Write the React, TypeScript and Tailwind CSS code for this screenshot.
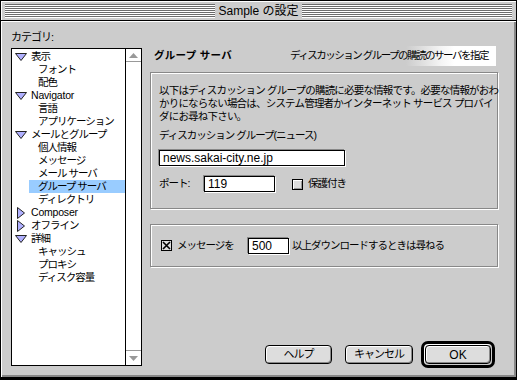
import React from 'react';

type Item = { label: string; kind: 'open' | 'closed' | 'leaf'; selected?: boolean; latin?: boolean };

const items: Item[] = [
  { label: '表示', kind: 'open' },
  { label: 'フォント', kind: 'leaf' },
  { label: '配色', kind: 'leaf' },
  { label: 'Navigator', kind: 'open', latin: true },
  { label: '言語', kind: 'leaf' },
  { label: 'アプリケーション', kind: 'leaf' },
  { label: 'メールとグループ', kind: 'open' },
  { label: '個人情報', kind: 'leaf' },
  { label: 'メッセージ', kind: 'leaf' },
  { label: 'メール サーバ', kind: 'leaf' },
  { label: 'グループ サーバ', kind: 'leaf', selected: true },
  { label: 'ディレクトリ', kind: 'leaf' },
  { label: 'Composer', kind: 'closed', latin: true },
  { label: 'オフライン', kind: 'closed' },
  { label: '詳細', kind: 'open' },
  { label: 'キャッシュ', kind: 'leaf' },
  { label: 'プロキシ', kind: 'leaf' },
  { label: 'ディスク容量', kind: 'leaf' },
];

const Twisty = ({ open }: { open: boolean }) =>
  open ? (
    <svg width="12" height="8" viewBox="0 0 12 8" className="shrink-0">
      <polygon points="0.5,0.5 11.5,0.5 6,7.5" fill="#b0b0ff" stroke="#222" strokeWidth="1" />
    </svg>
  ) : (
    <svg width="8" height="12" viewBox="0 0 8 12" className="shrink-0 ml-[2px]">
      <polygon points="0.5,0.5 7.5,6 0.5,11.5" fill="#b0b0ff" stroke="#222" strokeWidth="1" />
    </svg>
  );

const Stripes = () => (
  <div className="flex-1 h-[14px] bg-[repeating-linear-gradient(to_bottom,#6b6b6b_0px,#6b6b6b_1px,#ffffff_1px,#ffffff_2px)]" />
);

const Field = ({ value, className }: { value: string; className: string }) => (
  <div
    className={`h-[16px] bg-white border border-black shadow-[1px_1px_0_#ffffff,-1px_-1px_0_#888] pl-[3px] text-[12px] leading-[14px] tracking-normal text-black font-['Liberation_Sans',sans-serif] ${className}`}
  >
    {value}
  </div>
);

const Button = ({ children, className }: { children: React.ReactNode; className: string }) => (
  <div
    className={`h-[19px] flex items-center justify-center bg-[#dddddd] border border-black rounded-[4px] shadow-[inset_1px_1px_0_#ffffff,inset_-1px_-1px_0_#888888] text-[11px] ${className}`}
  >
    {children}
  </div>
);

export default function App() {
  return (
    <div className="w-[517px] h-[380px] bg-[#cccccc] border border-black border-b-[3px] flex flex-col text-black text-[10px] font-['Liberation_Sans','Noto_Sans_CJK_JP',sans-serif] tracking-[-1px] overflow-hidden">
      {/* title bar */}
      <div className="h-[20px] shrink-0 flex items-center px-[4px] border-b border-black shadow-[inset_1px_1px_0_#fff]">
        <Stripes />
        <div className="px-[3px] text-[12px] leading-[14px] tracking-normal">Sample の設定</div>
        <Stripes />
      </div>

      {/* body */}
      <div className="flex-1 flex shadow-[inset_1px_1px_0_#fff,inset_-2px_-2px_0_#888]">
        {/* left column */}
        <div className="ml-[10px] w-[131px] pt-[8px] flex flex-col pb-[11px]">
          <div className="h-[19px] text-[11px] leading-[16px]">カテゴリ:</div>
          <div className="flex-1 flex bg-white border border-black">
            <div className="flex-1 pt-[1px]">
              {items.map((it) => (
                <div key={it.label} className="h-[13px] flex items-center text-[10.5px]">
                  {it.kind === 'leaf' ? (
                    <div
                      className={`ml-[17px] h-[13px] flex-1 pl-[9px] leading-[13px] ${
                        it.selected ? 'bg-[#99ccff]' : ''
                      }`}
                    >
                      {it.label}
                    </div>
                  ) : (
                    <div className="flex items-center pl-[3px] gap-[4px] leading-[13px]">
                      <div className="w-[12px] flex justify-start">
                        <Twisty open={it.kind === 'open'} />
                      </div>
                      <span className={it.latin ? 'tracking-[-0.2px]' : ''}>{it.label}</span>
                    </div>
                  )}
                </div>
              ))}
            </div>
            <div className="w-[16px] border-l border-black flex flex-col">
              <div className="h-[13px] border-b border-[#999] flex items-center justify-center">
                <svg width="9" height="5" viewBox="0 0 9 5">
                  <polygon points="4.5,0 9,5 0,5" fill="#999" />
                </svg>
              </div>
              <div className="flex-1" />
              <div className="h-[15px] border-t border-[#999] flex items-center justify-center">
                <svg width="9" height="5" viewBox="0 0 9 5">
                  <polygon points="0,0 9,0 4.5,5" fill="#999" />
                </svg>
              </div>
            </div>
          </div>
        </div>

        {/* right column */}
        <div className="ml-[8px] w-[348px] pt-[25px] flex flex-col">
          <div className="w-[346px] h-[20px] flex items-center justify-between pl-[4px] pr-[8px] bg-[linear-gradient(to_right,transparent_0%,transparent_74%,#f4f4f4_84%,#ffffff_88%,#ffffff_100%)]">
            <span className="text-[10.5px] font-bold tracking-[0.3px]">グループ サーバ</span>
            <span className="text-[10.5px] tracking-[-1.5px]">ディスカッション グループの購読のサーバを指定</span>
          </div>

          <div className="mt-[6px] h-[137px] border border-[#888] shadow-[inset_1px_1px_0_#fff,1px_1px_0_#fff] pl-[8px] pt-[11px]">
            <div className="text-[10.5px] leading-[13px] tracking-[-0.8px] whitespace-nowrap">
              <div>以下はディスカッション グループの購読に必要な情報です。必要な情報がおわ</div>
              <div>かりにならない場合は、システム管理者かインターネット サービス プロバイ</div>
              <div>ダにお尋ね下さい。</div>
            </div>
            <div className="mt-[6px] text-[10.5px] leading-[13px]">ディスカッション グループ(ニュース)</div>
            <Field value="news.sakai-city.ne.jp" className="mt-[8px] w-[186px]" />
            <div className="mt-[10px] flex items-center h-[16px]">
              <span className="text-[10.5px] w-[45px]">ポート:</span>
              <Field value="119" className="w-[71px]" />
              <div className="ml-[17px] w-[11px] h-[11px] border border-black bg-[#dddddd] shadow-[inset_1px_1px_0_#fff,inset_-1px_-1px_0_#999]" />
              <span className="ml-[5px] text-[10.5px]">保護付き</span>
            </div>
          </div>

          <div className="mt-[15px] h-[43px] border border-[#888] shadow-[inset_1px_1px_0_#fff,1px_1px_0_#fff] pl-[10px] flex items-center">
            <div className="w-[11px] h-[11px] border border-black bg-[#dddddd] flex items-center justify-center">
              <svg width="9" height="9" viewBox="0 0 9 9">
                <path d="M1 1 L8 8 M8 1 L1 8" stroke="#000" strokeWidth="1.6" />
              </svg>
            </div>
            <span className="ml-[5px] text-[10.5px] w-[71px]">メッセージを</span>
            <Field value="500" className="w-[41px]" />
            <span className="ml-[3px] text-[10.5px]">以上ダウンロードするときは尋ねる</span>
          </div>

          <div className="mt-auto mb-[9px] flex items-center">
            <Button className="ml-[115px] w-[67px]">ヘルプ</Button>
            <Button className="ml-[13px] w-[68px]">キャンセル</Button>
            <div className="ml-[8px] p-[1px] border-[3px] border-black rounded-[7px] bg-[#cccccc] shadow-[inset_1px_1px_0_#fff]">
              <Button className="w-[66px] font-['Liberation_Sans',sans-serif] text-[12px] tracking-normal">OK</Button>
            </div>
          </div>
        </div>
      </div>
    </div>
  );
}
